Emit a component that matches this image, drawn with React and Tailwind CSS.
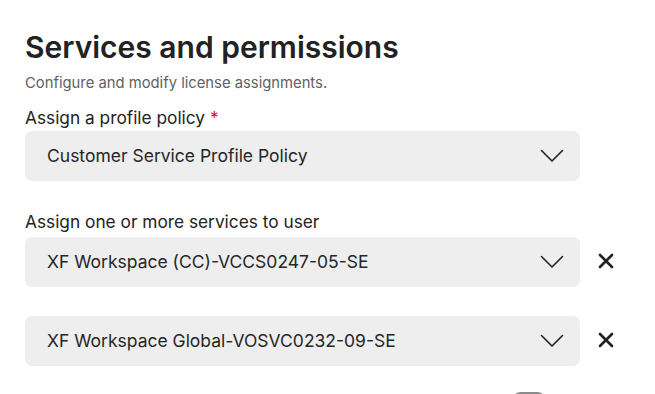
import React from 'react';

const Chevron = () => (
  <svg width="24" height="14" viewBox="0 0 24 14" fill="none" stroke="#222222" strokeWidth="1.6" strokeLinecap="round" strokeLinejoin="round">
    <path d="M1.5 1.5 L12 12 L22.5 1.5" />
  </svg>
);

const Close = () => (
  <svg width="16" height="16" viewBox="0 0 16 16" fill="none" stroke="#222222" strokeWidth="2.6" strokeLinecap="round">
    <path d="M2 2 L14 14 M14 2 L2 14" />
  </svg>
);

const Select = ({ value }) => (
  <div className="w-[555px] h-[50px] rounded-[7px] bg-[#eeeeee] flex items-center justify-between pl-[22px] pr-[16px]">
    <span className="text-[17.5px] text-[#262626]">{value}</span>
    <Chevron />
  </div>
);

const App = () => {
  const services = ['XF Workspace (CC)-VCCS0247-05-SE', 'XF Workspace Global-VOSVC0232-09-SE'];

  return (
    <div className="w-[655px] h-[394px] overflow-hidden bg-white px-[25px] pt-[29px] font-['Inter',sans-serif] text-[#222222]">
      {/* Titel */}
      <h1 className="text-[30px] leading-[36px] font-semibold">Services and permissions</h1>
      <p className="mt-[8px] text-[14.8px] leading-[20px] text-[#616161]">Configure and modify license assignments.</p>

      {/* Profil */}
      <label className="block mt-[13px] text-[17.3px] leading-[24px]">
        Assign a profile policy <span className="text-[#d4202c]">*</span>
      </label>
      <div className="mt-[1px]">
        <Select value="Customer Service Profile Policy" />
      </div>

      {/* Dienste */}
      <label className="block mt-[29px] text-[17.3px] leading-[24px]">Assign one or more services to user</label>
      <div className="mt-[3px] flex flex-col gap-[29px]">
        {services.map((s) => (
          <div key={s} className="flex items-center gap-[18px]">
            <Select value={s} />
            <button className="w-[16px] h-[16px] -mt-[2px] flex items-center justify-center">
              <Close />
            </button>
          </div>
        ))}
      </div>

      <div className="mt-[26px] flex justify-end pr-[83px]">
        <div className="w-[36px] h-[20px] rounded-full bg-[#8a8a8a]" />
      </div>
    </div>
  );
};

export default App;
